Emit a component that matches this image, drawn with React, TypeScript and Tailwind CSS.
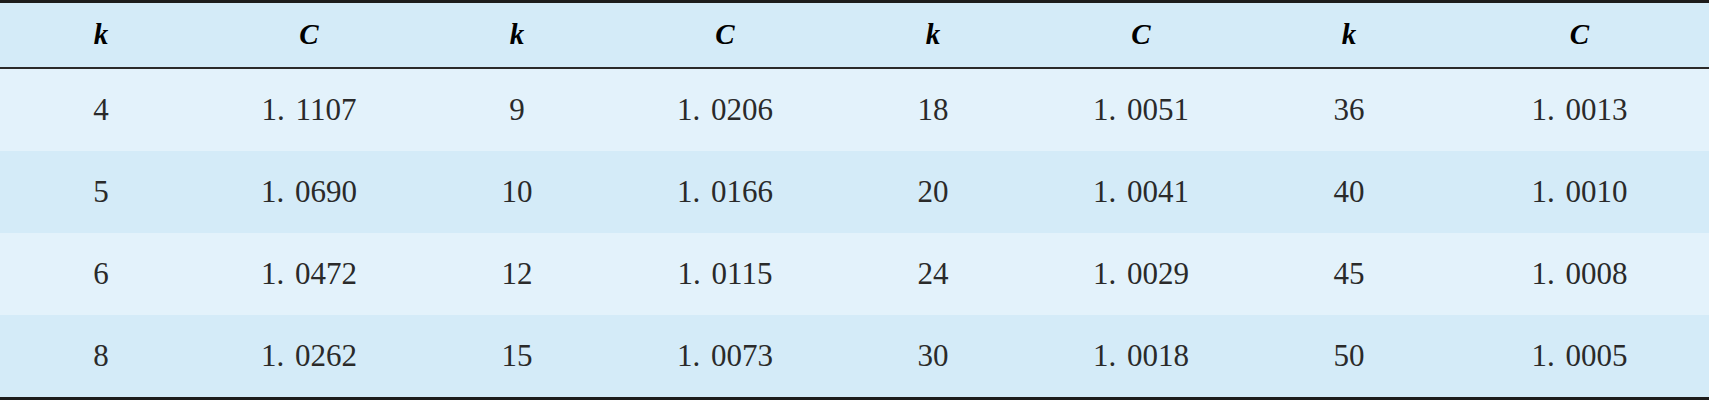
import React from "react";

const rows: string[][] = [
  ["4", "1.1107", "9", "1.0206", "18", "1.0051", "36", "1.0013"],
  ["5", "1.0690", "10", "1.0166", "20", "1.0041", "40", "1.0010"],
  ["6", "1.0472", "12", "1.0115", "24", "1.0029", "45", "1.0008"],
  ["8", "1.0262", "15", "1.0073", "30", "1.0018", "50", "1.0005"],
];

const headers = ["k", "C", "k", "C", "k", "C", "k", "C"];

function fmt(v: string) {
  const i = v.indexOf(".");
  if (i < 0) return v;
  return v.slice(0, i + 1) + " " + v.slice(i + 1);
}

export default function App() {
  return (
    <div
      className="w-[1709px] h-[400px] bg-[#d4ebf8] text-black"
      style={{ fontFamily: '"Liberation Serif", "Times New Roman", serif' }}
    >
      <div className="h-[3px] bg-[#1c1c1c]" />
      <div className="grid grid-cols-[202px_214px_202px_214px_202px_214px_202px_1fr] h-[64px] bg-[#d4ebf8]">
        {headers.map((h, i) => (
          <div
            key={i}
            className="flex items-center justify-center text-[29px] font-bold italic"
          >
            {h}
          </div>
        ))}
      </div>
      <div className="h-[2px] bg-[#2a2a2a]" />
      {rows.map((r, ri) => (
        <div
          key={ri}
          className={
            "grid grid-cols-[202px_214px_202px_214px_202px_214px_202px_1fr] h-[82px] " +
            (ri % 2 === 0 ? "bg-[#e3f2fb]" : "bg-[#d4ebf8]")
          }
        >
          {r.map((c, ci) => (
            <div
              key={ci}
              className="flex items-center justify-center text-[31px] text-[#2a2a2a] [word-spacing:3px]"
            >
              {fmt(c)}
            </div>
          ))}
        </div>
      ))}
      <div className="h-[3px] bg-[#1c1c1c]" />
    </div>
  );
}
